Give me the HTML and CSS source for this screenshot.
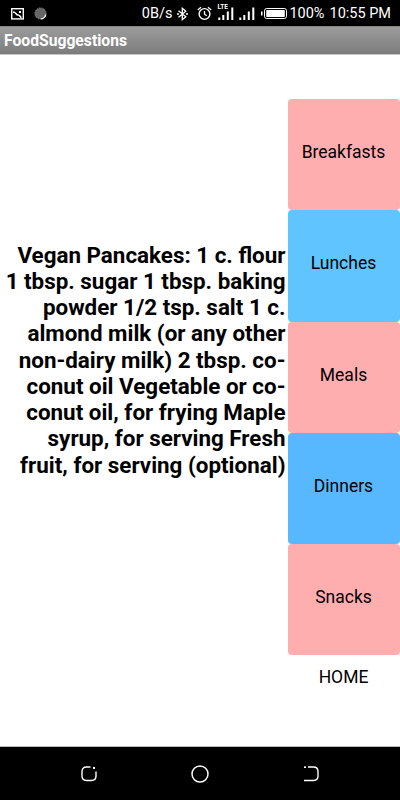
FILE: index.html
```html
<!DOCTYPE html>
<html lang="en">
<head>
    <meta charset="UTF-8">
    <meta name="viewport" content="width=device-width, initial-scale=1.0">
    <title>FoodSuggestions</title>
    <link rel="stylesheet" href="styles.css">
</head>
<body>

    <div class="status-bar">
        <svg class="picture" width="13" height="12" viewBox="0 0 13 12">
            <rect x="0.7" y="0.7" width="11.6" height="10.2" fill="none" stroke="white" stroke-width="1.4"/>
            <path d="M2 4C5 4 5 7 7 7S9 9 10.5 9.5" fill="none" stroke="white" stroke-width="1.5"/>
            <rect x="8" y="3" width="2" height="2" fill="white"/>
        </svg>
        <svg class="disc" width="13" height="13" viewBox="0 0 13 13">
            <circle cx="6.5" cy="6.5" r="5.6" fill="#666" stroke="#999" stroke-width="1" stroke-dasharray="1 1"/>
            <path d="M11.8 7.5A5.5 5.5 0 0 1 7 12" fill="none" stroke="#eee" stroke-width="1.3"/>
        </svg>
        <span class="speed">0B/s</span>
        <svg class="bluetooth" width="11" height="14" viewBox="0 0 11 14">
            <path d="M1.5 3.7L8.8 9.8L5.3 12.7V1.3L8.8 4.2L1.5 10.3" fill="none" stroke="white" stroke-width="1.3"/>
            <path d="M0 7H2M9 7H11" stroke="white" stroke-width="1.4"/>
        </svg>
        <svg class="alarm" width="15" height="15" viewBox="0 0 15 15">
            <circle cx="7.5" cy="8" r="5.4" fill="none" stroke="white" stroke-width="1.4"/>
            <path d="M0.8 4L4 1.3M14.2 4L11 1.3M7.5 5V8.2L9.8 9.7" fill="none" stroke="white" stroke-width="1.3"/>
        </svg>
        <div class="lte">
            <span class="lte-label">LTE</span>
            <svg width="16" height="13" viewBox="0 0 16 13">
                <path d="M1.3 10.5V13M5.3 8V13M9.8 4.5V13M14.3 0.5V13" stroke="white" stroke-width="2"/>
            </svg>
        </div>
        <svg class="signal" width="16" height="13" viewBox="0 0 16 13">
            <path d="M1.3 10.5V13M5.3 8V13M9.8 4.5V13M14.3 0.5V13" stroke="white" stroke-width="2"/>
        </svg>
        <svg class="battery" width="26" height="11" viewBox="0 0 26 11">
            <rect x="0" y="3.5" width="1.5" height="4" fill="white"/>
            <rect x="3.5" y="0.5" width="22" height="10" rx="2.2" fill="none" stroke="white"/>
            <rect x="5.2" y="2" width="18.6" height="7" rx="0.8" fill="white"/>
        </svg>
        <span class="percent">100%</span>
        <span class="clock">10:55 PM</span>
    </div>

    <div class="title-bar">FoodSuggestions</div>

    <div class="content">
        <div class="recipe">
            Vegan Pancakes: 1 c. flour<br>
            1 tbsp. sugar 1 tbsp. baking<br>
            powder 1/2 tsp. salt 1 c.<br>
            almond milk (or any other<br>
            non-dairy milk) 2 tbsp. co-<br>
            conut oil Vegetable or co-<br>
            conut oil, for frying Maple<br>
            syrup, for serving Fresh<br>
            fruit, for serving (optional)
        </div>
        <div class="menu">
            <button class="pink-button">Breakfasts</button>
            <button class="blue-button">Lunches</button>
            <button class="pink-button">Meals</button>
            <button class="dark-blue-button">Dinners</button>
            <button class="pink-button">Snacks</button>
            <button class="home-button">HOME</button>
        </div>
    </div>

    <div class="nav-bar">
        <svg width="18" height="18" viewBox="0 0 18 18">
            <path d="M10.5 2H6.5Q2 2 2 6.5V11Q2 15.5 6.5 15.5H11.5Q16 15.5 16 11V6.5" fill="none" stroke="white" stroke-width="1.4"/>
            <rect x="13" y="2" width="2" height="2" fill="white"/>
        </svg>
        <svg width="18" height="18" viewBox="0 0 18 18">
            <circle cx="9" cy="9" r="8" fill="none" stroke="white" stroke-width="1.5"/>
        </svg>
        <svg width="18" height="18" viewBox="0 0 18 18">
            <path d="M6 2H11.5Q16 2 16 6.5V11Q16 15.5 11.5 15.5H2" fill="none" stroke="white" stroke-width="1.4"/>
            <rect x="2" y="1.4" width="2" height="1.6" fill="white"/>
        </svg>
    </div>

</body>
</html>
```

FILE: styles.css
```css
body {
    display: flex;
    flex-direction: column;
    height: 800px;
    margin: 0;
    font-family: Roboto, sans-serif;
    background-color: white;
    color: black;
}

.status-bar {
    display: flex;
    align-items: center;
    box-sizing: border-box;
    height: 26px;
    padding: 1px 9px 0 11px;
    background-color: black;
    color: white;
    font-size: 14.5px;
    line-height: 25px;
    white-space: nowrap;
}

.status-bar svg {
    display: block;
    flex: none;
}

.disc {
    margin-left: 10px;
}

.speed {
    margin-left: auto;
}

.bluetooth {
    margin-left: 5px;
}

.alarm {
    margin-left: 9px;
}

.lte {
    position: relative;
    margin-left: 6px;
}

.lte-label {
    position: absolute;
    left: -1px;
    top: -3px;
    font-size: 6.5px;
    font-weight: bold;
    line-height: 7px;
}

.signal {
    margin-left: 5px;
}

.battery {
    margin-left: 6px;
}

.percent {
    margin-left: 2px;
}

.clock {
    margin-left: 5px;
}

.title-bar {
    box-sizing: border-box;
    height: 29px;
    padding-left: 4px;
    border-top: 1px solid #858585;
    border-bottom: 1px solid #c4c4c4;
    background: linear-gradient(#9c9c9c, #7c7c7c);
    color: white;
    font-size: 15.7px;
    font-weight: bold;
    line-height: 28px;
}

.content {
    display: flex;
    flex: 1;
    align-items: flex-start;
    justify-content: flex-end;
    padding-top: 44px;
}

.recipe {
    margin: 142.5px 2.5px 0 0;
    font-size: 22.4px;
    font-weight: bold;
    line-height: 26.25px;
    text-align: right;
    white-space: nowrap;
}

.menu {
    display: flex;
    flex-direction: column;
    width: 112px;
}

button {
    height: 111.25px;
    padding: 0 1px 5px 0;
    border: none;
    border-radius: 4px;
    color: black;
    font-family: inherit;
    font-size: 17.5px;
}

.pink-button {
    background-color: #ffaeb0;
}

.blue-button {
    background-color: #60c4ff;
}

.dark-blue-button {
    background-color: #58b8ff;
}

.home-button {
    height: 44px;
    padding: 0 1px 1px 0;
    background-color: white;
}

.nav-bar {
    display: flex;
    align-items: center;
    justify-content: space-between;
    box-sizing: border-box;
    height: 54px;
    padding: 0 80px;
    border-top: 1px solid #b8bcbe;
    background-color: black;
}
```
